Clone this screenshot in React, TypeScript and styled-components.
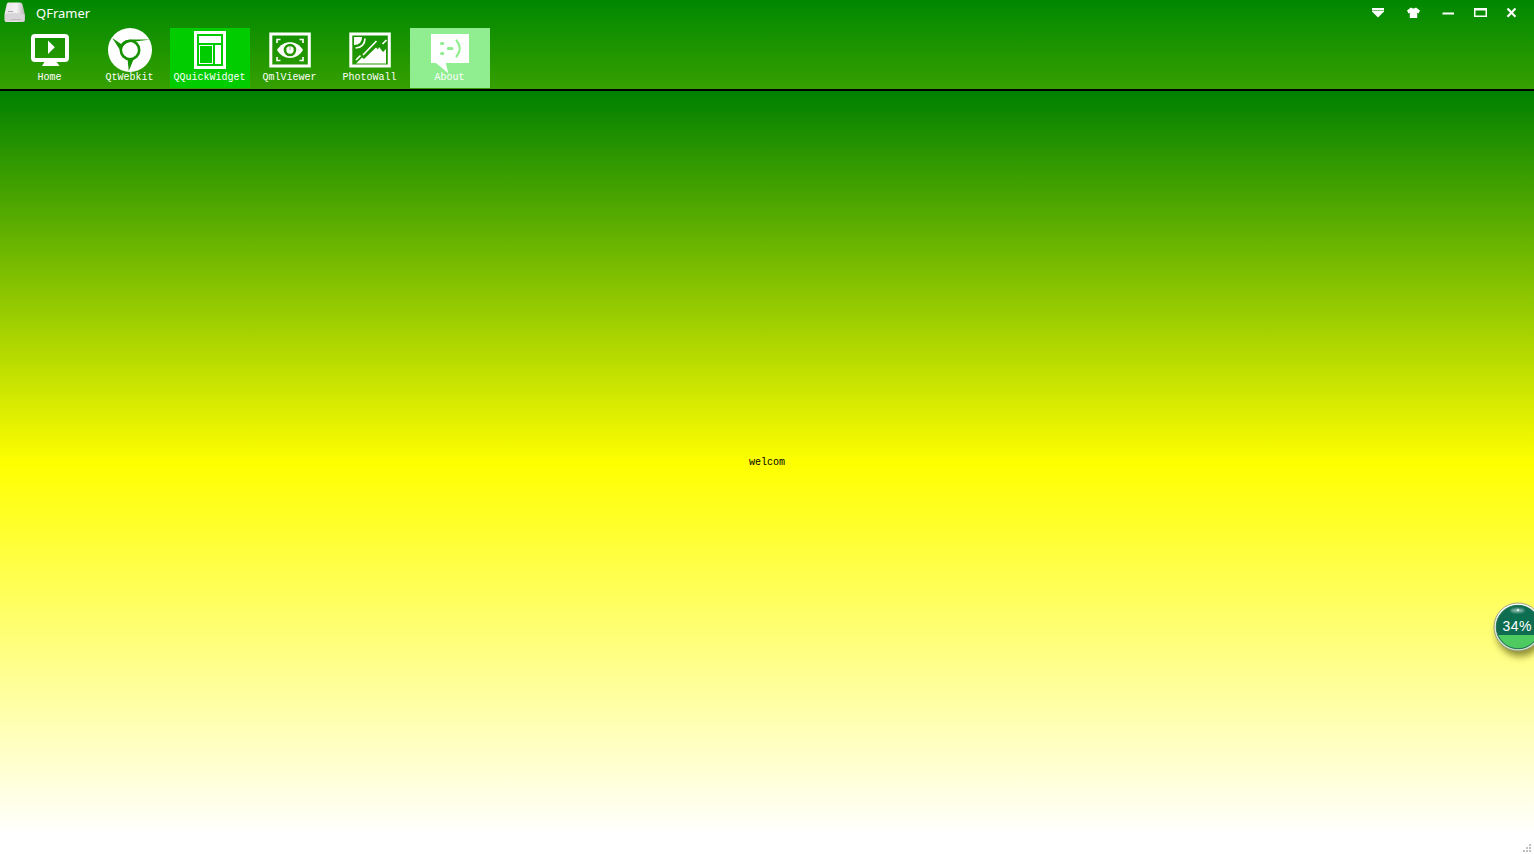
import React from "react";
import styled, { createGlobalStyle } from "styled-components";

const GlobalStyle = createGlobalStyle`
  html, body, #root { height: 100%; }
  body { margin: 0; overflow: hidden; font-family: "Noto Sans", sans-serif; }
`;

const Window = styled.div`
  position: relative;
  display: flex;
  flex-direction: column;
  height: 100%;
  overflow: hidden;
  background: #fff;
`;

const Header = styled.header`
  box-sizing: border-box;
  height: 91px;
  flex: none;
  border-bottom: 2px solid #000;
  background: linear-gradient(#008800, #36a000);
`;

const TitleBar = styled.div`
  height: 28px;
  display: flex;
  align-items: flex-start;
`;

const Logo = styled.svg`
  width: 22px;
  height: 22px;
  margin: 1px 0 0 4px;
`;

const Title = styled.h1`
  margin: 0 auto 0 10px;
  font: 13px/26px "Noto Sans", sans-serif;
  color: #fff;
`;

const Controls = styled.div`
  display: flex;
  height: 25px;
  padding-right: 7px;
`;

const Control = styled.button<{ $width: number }>`
  width: ${(p) => p.$width}px;
  height: 25px;
  padding: 0;
  border: 0;
  background: transparent;
  display: flex;
  justify-content: center;
`;

const Toolbar = styled.nav`
  display: flex;
  padding-left: 10px;
`;

const Tool = styled.button<{ $bg?: string }>`
  width: 80px;
  height: 60px;
  padding: 0;
  border: 0;
  background: ${(p) => p.$bg ?? "transparent"};
  display: flex;
  flex-direction: column;
  align-items: center;
`;

const ToolIcon = styled.svg`
  width: 44px;
  height: 44px;
  flex: none;
  overflow: visible;
`;

const ToolLabel = styled.span`
  margin-right: 1px;
  font: 10px/12px "Liberation Mono", monospace;
  color: #fff;
  white-space: nowrap;
`;

const Content = styled.main`
  flex: 1;
  display: flex;
  align-items: center;
  justify-content: center;
  background: linear-gradient(#008000, #ffff00 50%, #ffffff);
`;

const Welcome = styled.span`
  font: 10px/12px "Liberation Mono", monospace;
  color: #000;
`;

const StatusBar = styled.footer`
  height: 20px;
  flex: none;
  display: flex;
  justify-content: flex-end;
  align-items: flex-end;
  background: #fff;
`;

const Grip = styled.svg`
  width: 12px;
  height: 10px;
`;

const Meter = styled.svg`
  position: absolute;
  left: 1484px;
  top: 594px;
  width: 50px;
  height: 74px;
`;

const tools: { label: string; bg?: string; icon: React.ReactNode }[] = [
  {
    label: "Home",
    icon: (
      <>
        <rect x="5" y="8" width="34" height="24" rx="2" fill="none" stroke="#fff" strokeWidth="4" />
        <path d="M20 12.500V26L26.800 19.300z" fill="#fff" />
        <path d="M17 33H28L31.500 38H14z" fill="#fff" />
      </>
    ),
  },
  {
    label: "QtWebkit",
    icon: (
      <>
        <circle cx="22" cy="22" r="22" fill="#fff" />
        <circle cx="22" cy="22" r="9.200" fill="none" stroke="#169200" strokeWidth="2.600" />
        <g fill="#169200">
          <path d="M42.500 11.500 27 11.500C19 11.500 14.500 13 12 17.500L14 20C16 16 20 13.800 27 13.600z" />
          <path d="M4.300 10 12 22 14.500 17z" />
          <path d="M20.800 43 25.300 32 19.500 31z" />
        </g>
      </>
    ),
  },
  {
    label: "QQuickWidget",
    bg: "#00cc00",
    icon: (
      <>
        <rect x="7.500" y="4.500" width="29" height="35" fill="none" stroke="#fff" strokeWidth="3" />
        <path d="M11 8H33V15H11zM27 17H33V36H27z" fill="#fff" />
        <rect x="11.500" y="17.500" width="13" height="18" fill="none" stroke="#fff" />
      </>
    ),
  },
  {
    label: "QmlViewer",
    icon: (
      <>
        <rect x="2.800" y="6" width="38.500" height="32" fill="none" stroke="#fff" strokeWidth="3" />
        <path d="M9 15V11.500H12.500M31.500 11.500H35V15M9 29V32.500H12.500M31.500 32.500H35V29" fill="none" stroke="#fff" strokeWidth="1.600" />
        <path d="M9 22C15 11.500 29 11.500 35 22C29 32.500 15 32.500 9 22z" fill="#fff" />
        <circle cx="22" cy="22" r="5" fill="none" stroke="#259700" strokeWidth="2.600" />
        <path d="M22 22V16" stroke="#259700" strokeWidth="1" opacity=".5" />
      </>
    ),
  },
  {
    label: "PhotoWall",
    icon: (
      <>
        <rect x="2.800" y="6" width="38.500" height="32" fill="none" stroke="#fff" strokeWidth="3" />
        <path d="M6 9H14C14 14 11 17 6 17z" fill="#fff" />
        <path d="M17 10.500C17 16 13 20 7.500 20" fill="none" stroke="#fff" strokeWidth="1.700" />
        <path d="M8 35.500 14 29.500 16 31 28 19.500 30 21.500 31 19 35 24 38 21V35.500z" fill="#fff" />
        <path d="M15 27 28.500 13M8 32 12.500 27.500M34.500 16 38.500 12" stroke="#fff" strokeWidth="1.700" />
      </>
    ),
  },
  {
    label: "About",
    bg: "#90ee90",
    icon: (
      <>
        <path d="M3 6H41V35H17.800L20.300 45.300 8 35H3z" fill="#fff" />
        <g stroke="#90ee90" fill="none" strokeLinecap="round">
          <path d="M13.500 15.500H14.800M13.500 25.500H14.800M20.300 20.500H24" strokeWidth="3" />
          <path d="M28.500 12.500C33 18 33 23 28.500 28.500" strokeWidth="2.200" />
        </g>
      </>
    ),
  },
];

export default function App() {
  return (
    <Window>
      <GlobalStyle />
      <Header>
        <TitleBar>
          <Logo viewBox="0 0 22 22">
            <defs>
              <linearGradient id="drive" x2="1" y2="0">
                <stop offset="0" stopColor="#e8e4e8" />
                <stop offset=".6" stopColor="#f4f2f4" />
                <stop offset="1" stopColor="#b5b2b5" />
              </linearGradient>
            </defs>
            <path d="M4.500 1.500H16Q18 1.500 18.500 3.500L21 14V19Q21 21 19 21H2.500Q.500 21 .500 19V13L2.800 3Q3 1.500 4.500 1.500z" fill="url(#drive)" />
            <path d="M1 13Q11 11 20.500 13.500V19Q20.500 20.500 19 20.500H2.500Q1 20.500 1 19z" fill="#d8d5d8" />
            <path d="M4 10.500H9" stroke="#aaa" />
            <path d="M7 18.500H17" stroke="#bbb" />
          </Logo>
          <Title>QFramer</Title>
          <Controls>
            <Control $width={35} aria-label="Menu">
              <svg width="14" height="25">
                <path d="M1 8H13V11.500L7 17.500 1 11.500z" fill="#fff" />
                <path d="M1 10.500H13" stroke="#7fc57f" />
              </svg>
            </Control>
            <Control $width={35} aria-label="Skin">
              <svg width="14" height="25">
                <path d="M5 7.500Q7.500 9.500 10 7.500L14 10.500 12.500 13.500 11.200 12.800V18H3.800V12.800L2.500 13.500 1 10.500z" fill="#fff" />
              </svg>
            </Control>
            <Control $width={35} aria-label="Minimize">
              <svg width="12" height="25">
                <path d="M.500 13.500H12" stroke="#fff" strokeWidth="2" />
              </svg>
            </Control>
            <Control $width={30} aria-label="Maximize">
              <svg width="14" height="25">
                <path d="M1 8H14V17H1zM2.500 10.500V15.500H12.500V10.500z" fillRule="evenodd" fill="#fff" />
              </svg>
            </Control>
            <Control $width={32} aria-label="Close">
              <svg width="10" height="25">
                <path d="M1.500 8.500 9.500 16.800M9.500 8.500 1.500 16.800" stroke="#fff" strokeWidth="2.200" />
              </svg>
            </Control>
          </Controls>
        </TitleBar>
        <Toolbar>
          {tools.map((tool) => (
            <Tool key={tool.label} $bg={tool.bg}>
              <ToolIcon viewBox="0 0 44 44">{tool.icon}</ToolIcon>
              <ToolLabel>{tool.label}</ToolLabel>
            </Tool>
          ))}
        </Toolbar>
      </Header>
      <Content>
        <Welcome>welcom</Welcome>
      </Content>
      <StatusBar>
        <Grip viewBox="0 0 12 10" fill="#c0c0c0">
          <path d="M7 0H9V2H7zM4 3H6V5H4zM7 3H9V5H7zM1 6H3V8H1zM4 6H6V8H4zM7 6H9V8H7z" />
        </Grip>
      </StatusBar>
      <Meter viewBox="0 0 50 74">
        <defs>
          <radialGradient id="orb" cx=".5" cy=".35" r=".65">
            <stop offset="0" stopColor="#087050" />
            <stop offset=".8" stopColor="#126b50" />
            <stop offset="1" stopColor="#2b8068" />
          </radialGradient>
          <linearGradient id="rim" x2="0" y2="1">
            <stop offset="0" stopColor="#ffffff" />
            <stop offset="1" stopColor="#c8d8c0" />
          </linearGradient>
          <clipPath id="disc"><circle cx="34" cy="33" r="21.500" /></clipPath>
          <filter id="soft" x="-50%" y="-50%" width="200%" height="200%"><feGaussianBlur stdDeviation="3.500" /></filter>
          <filter id="shine"><feGaussianBlur stdDeviation=".8" /></filter>
        </defs>
        <circle cx="36" cy="39" r="23.500" fill="#444400" opacity=".6" filter="url(#soft)" />
        <circle cx="34" cy="33" r="24" fill="url(#rim)" stroke="#8c9477" strokeWidth=".8" />
        <circle cx="34" cy="33" r="22" fill="url(#orb)" />
        <rect x="10" y="41" width="48" height="16" fill="#4ecb60" clipPath="url(#disc)" />
        <circle cx="34" cy="33" r="21.700" fill="none" stroke="#267c58" strokeWidth="1" />
        <ellipse cx="33.500" cy="16.500" rx="7" ry="2.200" fill="#fff" opacity=".5" filter="url(#shine)" />
        <circle cx="34" cy="16" r="1.300" fill="#fff" opacity=".7" />
        <text x="18.500" y="37" fontFamily="Liberation Sans, sans-serif" fontSize="14" letterSpacing=".5" fill="#fff">34%</text>
      </Meter>
    </Window>
  );
}
